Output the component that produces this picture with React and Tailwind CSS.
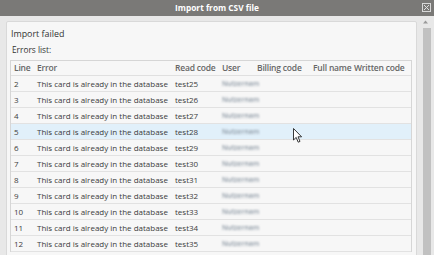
import React from 'react';

const rows = [2, 3, 4, 5, 6, 7, 8, 9, 10, 11, 12].map((n, i) => ({
  line: n,
  code: 'test' + (25 + i),
}));

const cols = 'grid grid-cols-[23px_138px_47px_35px_56px_41px_61px] whitespace-nowrap';

function Cursor() {
  return (
    <svg className="absolute left-[293px] top-[128px]" width="10" height="16" viewBox="0 0 10 16">
      <path d="M0.5 0.5 L0.5 12 L3.2 9.4 L5.2 14.2 L7 13.4 L5 8.8 L8.6 8.8 Z" fill="#fff" stroke="#222" strokeWidth="0.9" strokeLinejoin="round" />
    </svg>
  );
}

export default function App() {
  return (
    <div className="w-[434px] h-[255px] bg-[#e8e8e8] overflow-hidden relative font-['Open_Sans',sans-serif]">
      {/* Title bar */}
      <div className="h-[16px] bg-[#7a7977] flex items-center justify-center relative">
        <span className="text-white font-bold text-[8.3px] leading-none">Import from CSV file</span>
        <div className="absolute right-[3px] top-[3px] w-[9px] h-[9px] border border-[#d8d8d8] flex items-center justify-center">
          <svg width="7" height="7" viewBox="0 0 7 7">
            <path d="M1 1 L6 6 M6 1 L1 6" stroke="#e0e0e0" strokeWidth="1" />
          </svg>
        </div>
      </div>

      <div className="flex">
        {/* Panel */}
        <div className="ml-[6px] mt-[5px] w-[411px] h-[240px] bg-[#f7f7f7] border border-[#d9d9d9] rounded-[2px] pl-[3px] pr-[4px]">
          <div className="h-[17px] mt-[3px] pl-[1px] flex items-center text-[8.9px] text-[#333]">Import failed</div>
          <div className="h-[14px] mt-[1px] pl-[2px] flex items-center text-[8.3px] text-[#333]">Errors list:</div>
          <div className="mt-[3px] border-t border-l border-r border-[#d6d6d6] text-[8px]">
            <div className={cols + ' h-[15px] items-center border-b border-[#e0e0e0] font-semibold text-[8.5px] tracking-[-0.2px] text-[#666]'}>
              <div className="pl-[3px]">Line</div>
              <div className="pl-[3px]">Error</div>
              <div className="pl-[3px]">Read code</div>
              <div className="pl-[3px]">User</div>
              <div className="pl-[3px]">Billing code</div>
              <div className="pl-[3px]">Full name</div>
              <div className="pl-[3px]">Written code</div>
            </div>
            {rows.map((r) => (
              <div
                key={r.line}
                className={cols + ' h-[16px] items-center border-b border-[#e2e2e2] text-[#3c3c3c] ' + (r.line === 5 ? 'bg-[#e1f0fa]' : '')}
              >
                <div className="pl-[3px]">{r.line}</div>
                <div className="pl-[3px]">This card is already in the database</div>
                <div className="pl-[3px]">{r.code}</div>
                <div className="pl-[3px]">
                  <span className="blur-[1.2px] text-[#8a96a2] text-[6.8px] font-semibold">Nutzernam</span>
                </div>
                <div />
                <div />
                <div />
              </div>
            ))}
          </div>
        </div>

        {/* Scrollbar */}
        <div className="w-[17px] h-[239px] flex flex-col items-center">
          <svg className="mt-[4px]" width="7" height="4" viewBox="0 0 7 4">
            <path d="M3.5 0.5 L6 3.5 L1 3.5 Z" fill="#9a9a9a" />
          </svg>
          <div className="mt-[4px] ml-[3px] w-[8px] flex-1 bg-[#c1c1c1]" />
        </div>
      </div>

      <Cursor />
    </div>
  );
}
